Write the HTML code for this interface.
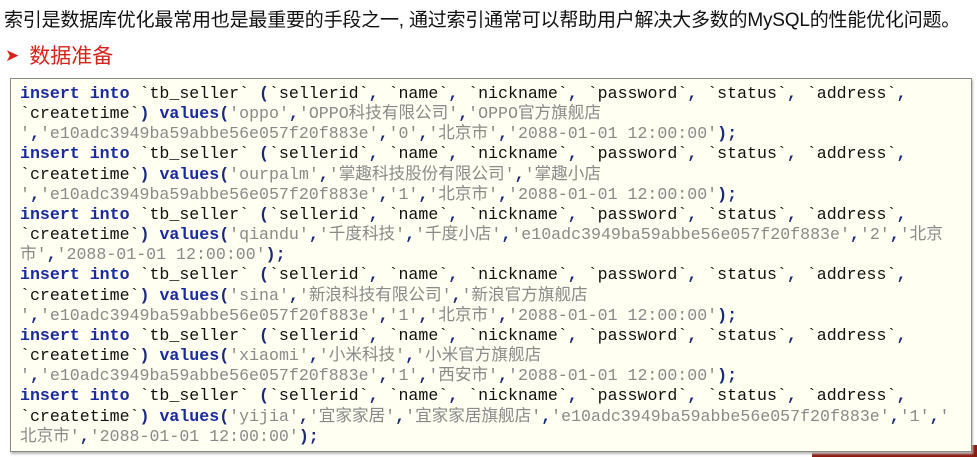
<!DOCTYPE html>
<html><head><meta charset="utf-8">
<style>
body{margin:0;width:977px;height:457px;background:#fff;overflow:hidden;position:relative;font-family:"Liberation Sans","Noto Sans CJK SC",sans-serif}
.t{position:absolute;left:4px;top:5px;font-size:19px;color:#111;white-space:nowrap;letter-spacing:-0.2px}
.h{position:absolute;left:5px;top:40px;font-size:21px;color:#d6231b;white-space:nowrap}
.h b{font-weight:normal;font-size:17px;margin-right:10px;position:relative;top:-2px}
.box{position:absolute;left:10px;top:78px;width:960px;height:372px;background:#fffff2;border:1px solid #8a8a80;box-shadow:1px 2px 2px #bbb}
pre{margin:0;position:absolute;left:9px;top:5px;font-family:"Liberation Mono","Noto Sans CJK SC",monospace;font-size:16.6px;line-height:20.15px;color:#111}
.k{color:#1a2aa0;font-weight:bold}
.s{color:#8a8a8a}
.p{color:#1a2a7a;font-weight:bold}
.red{position:absolute;left:812px;top:445px;width:165px;height:12px;background:#8c1a10}
</style></head><body>
<div class="t">索引是数据库优化最常用也是最重要的手段之一, 通过索引通常可以帮助用户解决大多数的MySQL的性能优化问题。</div>
<div class="h"><b>➤</b>数据准备</div>
<div class="red"></div>
<div class="box"><pre><span class="k">insert into</span> `tb_seller` <span class="p">(</span>`sellerid`<span class="p">,</span> `name`<span class="p">,</span> `nickname`<span class="p">,</span> `password`<span class="p">,</span> `status`<span class="p">,</span> `address`<span class="p">,</span>
`createtime`<span class="p">)</span> <span class="k">values</span><span class="p">(</span><span class="s">'oppo'</span><span class="p">,</span><span class="s">'OPPO科技有限公司'</span><span class="p">,</span><span class="s">'OPPO官方旗舰店</span>
<span class="s">'</span><span class="p">,</span><span class="s">'e10adc3949ba59abbe56e057f20f883e'</span><span class="p">,</span><span class="s">'0'</span><span class="p">,</span><span class="s">'北京市'</span><span class="p">,</span><span class="s">'2088-01-01 12:00:00'</span><span class="p">);</span>
<span class="k">insert into</span> `tb_seller` <span class="p">(</span>`sellerid`<span class="p">,</span> `name`<span class="p">,</span> `nickname`<span class="p">,</span> `password`<span class="p">,</span> `status`<span class="p">,</span> `address`<span class="p">,</span>
`createtime`<span class="p">)</span> <span class="k">values</span><span class="p">(</span><span class="s">'ourpalm'</span><span class="p">,</span><span class="s">'掌趣科技股份有限公司'</span><span class="p">,</span><span class="s">'掌趣小店</span>
<span class="s">'</span><span class="p">,</span><span class="s">'e10adc3949ba59abbe56e057f20f883e'</span><span class="p">,</span><span class="s">'1'</span><span class="p">,</span><span class="s">'北京市'</span><span class="p">,</span><span class="s">'2088-01-01 12:00:00'</span><span class="p">);</span>
<span class="k">insert into</span> `tb_seller` <span class="p">(</span>`sellerid`<span class="p">,</span> `name`<span class="p">,</span> `nickname`<span class="p">,</span> `password`<span class="p">,</span> `status`<span class="p">,</span> `address`<span class="p">,</span>
`createtime`<span class="p">)</span> <span class="k">values</span><span class="p">(</span><span class="s">'qiandu'</span><span class="p">,</span><span class="s">'千度科技'</span><span class="p">,</span><span class="s">'千度小店'</span><span class="p">,</span><span class="s">'e10adc3949ba59abbe56e057f20f883e'</span><span class="p">,</span><span class="s">'2'</span><span class="p">,</span><span class="s">'北京</span>
<span class="s">市'</span><span class="p">,</span><span class="s">'2088-01-01 12:00:00'</span><span class="p">);</span>
<span class="k">insert into</span> `tb_seller` <span class="p">(</span>`sellerid`<span class="p">,</span> `name`<span class="p">,</span> `nickname`<span class="p">,</span> `password`<span class="p">,</span> `status`<span class="p">,</span> `address`<span class="p">,</span>
`createtime`<span class="p">)</span> <span class="k">values</span><span class="p">(</span><span class="s">'sina'</span><span class="p">,</span><span class="s">'新浪科技有限公司'</span><span class="p">,</span><span class="s">'新浪官方旗舰店</span>
<span class="s">'</span><span class="p">,</span><span class="s">'e10adc3949ba59abbe56e057f20f883e'</span><span class="p">,</span><span class="s">'1'</span><span class="p">,</span><span class="s">'北京市'</span><span class="p">,</span><span class="s">'2088-01-01 12:00:00'</span><span class="p">);</span>
<span class="k">insert into</span> `tb_seller` <span class="p">(</span>`sellerid`<span class="p">,</span> `name`<span class="p">,</span> `nickname`<span class="p">,</span> `password`<span class="p">,</span> `status`<span class="p">,</span> `address`<span class="p">,</span>
`createtime`<span class="p">)</span> <span class="k">values</span><span class="p">(</span><span class="s">'xiaomi'</span><span class="p">,</span><span class="s">'小米科技'</span><span class="p">,</span><span class="s">'小米官方旗舰店</span>
<span class="s">'</span><span class="p">,</span><span class="s">'e10adc3949ba59abbe56e057f20f883e'</span><span class="p">,</span><span class="s">'1'</span><span class="p">,</span><span class="s">'西安市'</span><span class="p">,</span><span class="s">'2088-01-01 12:00:00'</span><span class="p">);</span>
<span class="k">insert into</span> `tb_seller` <span class="p">(</span>`sellerid`<span class="p">,</span> `name`<span class="p">,</span> `nickname`<span class="p">,</span> `password`<span class="p">,</span> `status`<span class="p">,</span> `address`<span class="p">,</span>
`createtime`<span class="p">)</span> <span class="k">values</span><span class="p">(</span><span class="s">'yijia'</span><span class="p">,</span><span class="s">'宜家家居'</span><span class="p">,</span><span class="s">'宜家家居旗舰店'</span><span class="p">,</span><span class="s">'e10adc3949ba59abbe56e057f20f883e'</span><span class="p">,</span><span class="s">'1'</span><span class="p">,</span><span class="s">'</span>
<span class="s">北京市'</span><span class="p">,</span><span class="s">'2088-01-01 12:00:00'</span><span class="p">);</span></pre></div>
</body></html>
